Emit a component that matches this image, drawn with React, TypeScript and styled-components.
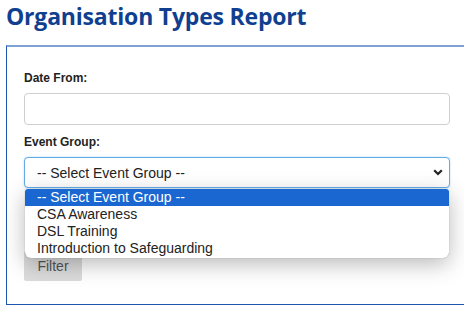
import React from "react";
import styled, { createGlobalStyle } from "styled-components";

const GlobalStyle = createGlobalStyle`
  html, body {
    margin: 0;
    padding: 0;
    overflow: hidden;
    background: #ffffff;
  }
`;

const Page = styled.div`
  width: 464px;
  height: 310px;
  overflow: hidden;
  font-family: "Liberation Sans", Arial, sans-serif;
`;

const Title = styled.h1`
  margin: 0;
  padding: 0 0 0 6px;
  font-family: "Open Sans", "Liberation Sans", sans-serif;
  font-size: 23px;
  font-weight: 700;
  line-height: 32px;
  letter-spacing: -0.2px;
  color: #113f8f;
`;

const Panel = styled.section`
  margin: 13px 0 0 6px;
  width: 480px;
  box-sizing: border-box;
  border: 1px solid #1f56ad;
  border-top: 2px solid #7ea2d6;
  padding: 24px 0 23px 17px;
`;

const Field = styled.div`
  width: 426px;
  margin-bottom: 10px;
  position: relative;
`;

const Label = styled.label`
  display: block;
  font-size: 12px;
  font-weight: 700;
  line-height: 14px;
  color: #222;
  margin-bottom: 8px;
`;

const TextBox = styled.div`
  height: 32px;
  box-sizing: border-box;
  border: 1px solid #cfcfcf;
  border-radius: 4px;
  background: #fff;
`;

const SelectBox = styled.div`
  height: 31px;
  box-sizing: border-box;
  border: 1px solid #62ace6;
  border-radius: 4px;
  background: #fff;
  display: flex;
  align-items: center;
  justify-content: space-between;
  padding: 0 6px 0 12px;
  font-size: 14px;
  color: #222;
  box-shadow: 0 0 2px rgba(102, 175, 233, 0.5);
`;

const Chevron = () => (
  <svg width="10" height="7" viewBox="0 0 10 7">
    <path d="M1.2 1.2 L5 5 L8.8 1.2" fill="none" stroke="#222" strokeWidth="2.2" />
  </svg>
);

const Dropdown = styled.ul`
  position: absolute;
  top: 100%;
  left: 1px;
  right: 1px;
  margin: 1px 0 0;
  padding: 0 0 1px;
  list-style: none;
  background: #fff;
  border-radius: 0 0 6px 6px;
  box-shadow: 0 6px 22px rgba(0, 0, 0, 0.28), 0 0 1px rgba(0, 0, 0, 0.4);
  z-index: 5;
`;

const Option = styled.li<{ $active?: boolean }>`
  height: 17px;
  line-height: 17px;
  padding-left: 12px;
  font-size: 14px;
  color: ${(p) => (p.$active ? "#ffffff" : "#222")};
  background: ${(p) => (p.$active ? "#1a67d2" : "transparent")};
  border-radius: ${(p) => (p.$active ? "3px 3px 0 0" : "0")};
`;

const FilterButton = styled.button`
  margin-top: 53px;
  width: 58px;
  height: 30px;
  border: none;
  border-radius: 2px;
  background: #dcdcdc;
  color: #555;
  font-family: "Liberation Sans", Arial, sans-serif;
  font-size: 14px;
  padding: 0;
`;

const options = [
  "-- Select Event Group --",
  "CSA Awareness",
  "DSL Training",
  "Introduction to Safeguarding",
];

export default function App() {
  return (
    <Page>
      <GlobalStyle />
      <Title>Organisation Types Report</Title>
      <Panel>
        <Field>
          <Label>Date From:</Label>
          <TextBox />
        </Field>
        <Field>
          <Label>Event Group:</Label>
          <SelectBox>
            <span>-- Select Event Group --</span>
            <Chevron />
          </SelectBox>
          <Dropdown>
            {options.map((o, i) => (
              <Option key={o} $active={i === 0}>
                {o}
              </Option>
            ))}
          </Dropdown>
        </Field>
        <FilterButton>Filter</FilterButton>
      </Panel>
    </Page>
  );
}
